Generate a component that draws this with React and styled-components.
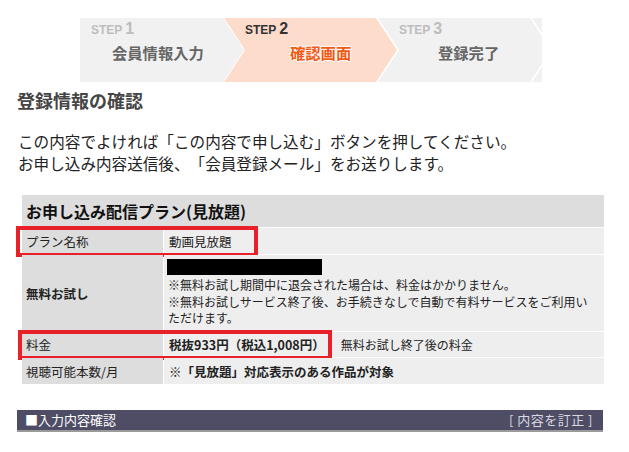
import React from "react";
import styled, { createGlobalStyle } from "styled-components";

const Global = createGlobalStyle`
  html, body { margin: 0; padding: 0; background: #fff; }
  body {
    font-family: "Noto Sans CJK JP", "Noto Sans", sans-serif;
    color: #222;
    text-spacing-trim: space-all;
  }
  * { box-sizing: border-box; }
`;

const Page = styled.div`
  width: 629px;
  height: 452px;
  overflow: hidden;
  padding: 18px 0 0 17px;
  display: flex;
  flex-direction: column;
`;

const Stepper = styled.div`
  display: flex;
  width: 462px;
  height: 64px;
  margin-left: 63px;
  overflow: hidden;
  flex: 0 0 auto;
`;

const D = 21;
const Step = styled.div`
  flex: 0 0 ${(p) => p.$w}px;
  height: 100%;
  margin-left: ${(p) => p.$ml || 0}px;
  padding-top: 4px;
  background: ${(p) => (p.$active ? "#fddccc" : "#f1f1f1")};
  clip-path: ${(p) =>
    p.$first
      ? `polygon(0 0, ${p.$w - D}px 0, ${p.$w}px 50%, ${p.$w - D}px 100%, 0 100%)`
      : `polygon(0 0, ${p.$w - D}px 0, ${p.$w}px 50%, ${p.$w - D}px 100%, 0 100%, ${D}px 50%)`};
`;

const StepNum = styled.div`
  padding-left: ${(p) => p.$x}px;
  font-family: "Liberation Sans", Arial, sans-serif;
  font-weight: bold;
  font-size: 12px;
  line-height: 14px;
  height: 14px;
  color: ${(p) => (p.$active ? "#333" : "#bdbdbd")};
  display: flex;
  align-items: baseline;
`;

const Digit = styled.span`
  font-size: 16px;
  margin-left: 3px;
`;

const StepLabel = styled.div`
  padding-left: ${(p) => p.$x}px;
  margin-top: 6px;
  font-size: 15.3px;
  line-height: 20px;
  font-weight: bold;
  white-space: nowrap;
  color: ${(p) => (p.$active ? "#f05a14" : "#666")};
  text-shadow: ${(p) =>
    p.$active
      ? "0 0 1px #fff, 1px 0 1px #fff, -1px 0 1px #fff, 0 1px 1px #fff, 0 -1px 1px #fff"
      : "none"};
`;

const Title = styled.h2`
  margin: 5px 0 0 0;
  font-size: 18px;
  line-height: 26px;
  font-weight: bold;
  color: #454545;
`;

const Lead = styled.p`
  margin: 17px 0 0 1px;
  font-size: 15.6px;
  line-height: 22px;
  color: #222;
`;

const Table = styled.div`
  margin: 21px 0 0 5px;
  width: 582px;
  display: flex;
  flex-direction: column;
  gap: 1px;
`;

const TableHead = styled.div`
  height: 32px;
  background: #dddddd;
  padding-left: 4px;
  display: flex;
  align-items: center;
  font-size: 16px;
  font-weight: bold;
  color: #111;
`;

const Row = styled.div`
  position: relative;
  display: grid;
  grid-template-columns: 141px 1fr;
  gap: 1px;
  min-height: ${(p) => p.$h}px;
`;

const LabelCell = styled.div`
  background: #dddddd;
  padding: 0 4px;
  display: flex;
  align-items: center;
  font-size: 12.5px;
  font-weight: ${(p) => (p.$bold ? "bold" : "normal")};
  color: #222;
`;

const ValueCell = styled.div`
  background: #eeeeee;
  padding: ${(p) => (p.$stack ? "4px 5px 4px 3px" : "0 5px")};
  display: flex;
  flex-direction: ${(p) => (p.$stack ? "column" : "row")};
  align-items: ${(p) => (p.$stack ? "flex-start" : "center")};
  font-size: 12.5px;
  font-weight: ${(p) => (p.$bold ? "bold" : "normal")};
  color: #222;
`;

const Redact = styled.div`
  width: 155px;
  height: 16px;
  background: #000;
`;

const Notes = styled.div`
  margin-top: 2px;
  padding-left: 1px;
  font-size: 12px;
  line-height: 16.5px;
  white-space: nowrap;
`;

const Strong = styled.span`
  font-weight: bold;
`;

const Side = styled.span`
  margin-left: 16px;
  font-size: 12px;
`;

const Highlight = styled.div`
  position: absolute;
  left: ${(p) => p.$l}px;
  top: ${(p) => p.$t}px;
  width: ${(p) => p.$w}px;
  height: ${(p) => p.$h}px;
  border: 4px solid #e8202a;
  pointer-events: none;
`;

const Bar = styled.div`
  margin-top: 26px;
  width: 586px;
  height: 22px;
  background: #4f4d66;
  border-bottom: 2px solid #9a9a9a;
  padding: 0 10px 0 8px;
  display: flex;
  justify-content: space-between;
  align-items: center;
  font-size: 13px;
  line-height: 20px;
  color: #fff;
`;

const BarLink = styled.span`
  color: #d8d8e0;
  letter-spacing: 0.5px;
`;

const steps = [
  { n: 1, label: "会員情報入力", w: 164, ml: 0, nx: 11, lx: 32, first: true },
  { n: 2, label: "確認画面", w: 173, ml: -20, nx: 21, lx: 66, active: true },
  { n: 3, label: "登録完了", w: 173, ml: -19, nx: 21, lx: 60 },
  { n: 4, label: "", w: 173, ml: -19, nx: 21, lx: 60, hidden: true },
];

export default function App() {
  return (
    <>
      <Global />
      <Page>
        <Stepper>
          {steps.map((s) => (
            <Step key={s.n} $w={s.w} $ml={s.ml} $first={s.first} $active={s.active}>
              {!s.hidden && (
                <>
                  <StepNum $x={s.nx} $active={s.active}>
                    STEP<Digit>{s.n}</Digit>
                  </StepNum>
                  <StepLabel $x={s.lx} $active={s.active}>
                    {s.label}
                  </StepLabel>
                </>
              )}
            </Step>
          ))}
        </Stepper>

        <Title>登録情報の確認</Title>
        <Lead>
          この内容でよければ「この内容で申し込む」ボタンを押してください。
          <br />
          お申し込み内容送信後、「会員登録メール」をお送りします。
        </Lead>

        <Table>
          <TableHead>お申し込み配信プラン(見放題)</TableHead>
          <Row $h={26}>
            <LabelCell>プラン名称</LabelCell>
            <ValueCell>動画見放題</ValueCell>
            <Highlight $l={-6} $t={-2} $w={242} $h={31} />
          </Row>
          <Row $h={76}>
            <LabelCell $bold>無料お試し</LabelCell>
            <ValueCell $stack>
              <Redact />
              <Notes>
                ※無料お試し期間中に退会された場合は、料金はかかりません。
                <br />
                ※無料お試しサービス終了後、お手続きなしで自動で有料サービスをご利用い
                <br />
                ただけます。
              </Notes>
            </ValueCell>
          </Row>
          <Row $h={25}>
            <LabelCell>料金</LabelCell>
            <ValueCell>
              <Strong>税抜933円（税込1,008円）</Strong>
              <Side>無料お試し終了後の料金</Side>
            </ValueCell>
            <Highlight $l={-4} $t={-2} $w={314} $h={30} />
          </Row>
          <Row $h={26}>
            <LabelCell>視聴可能本数/月</LabelCell>
            <ValueCell $bold>※「見放題」対応表示のある作品が対象</ValueCell>
          </Row>
        </Table>

        <Bar>
          <span>■入力内容確認</span>
          <BarLink>[ 内容を訂正 ]</BarLink>
        </Bar>
      </Page>
    </>
  );
}
